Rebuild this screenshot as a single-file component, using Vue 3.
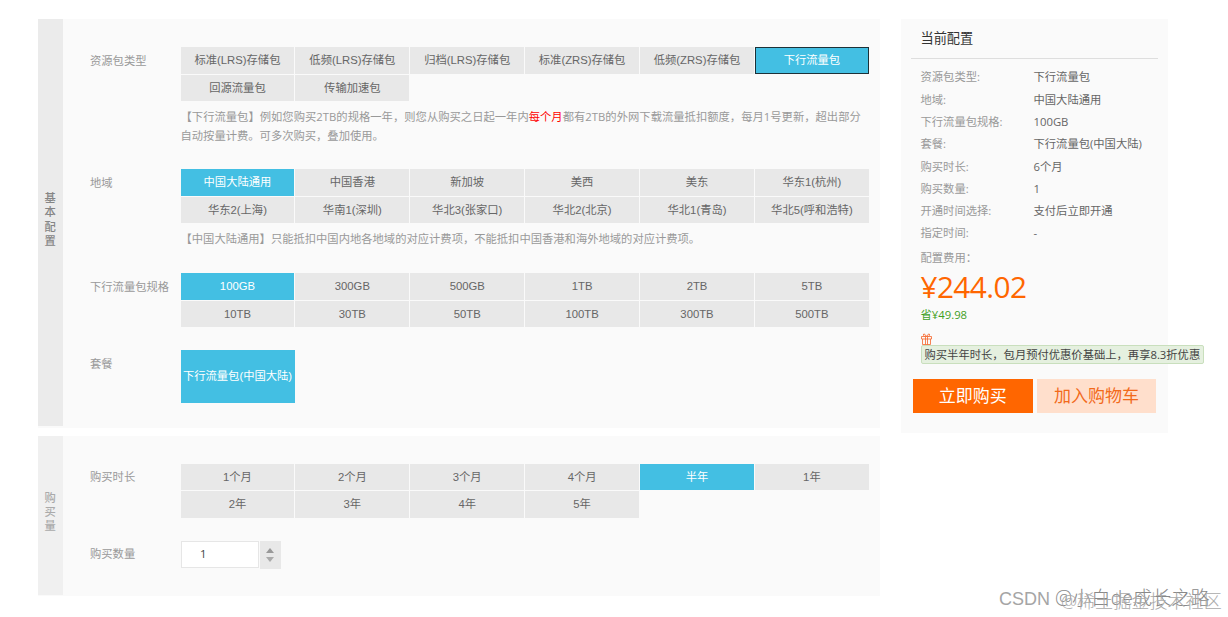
<script setup>
import { ref } from "vue";

const types = ["标准(LRS)存储包", "低频(LRS)存储包", "归档(LRS)存储包", "标准(ZRS)存储包", "低频(ZRS)存储包", "下行流量包", "回源流量包", "传输加速包"];
const regions = ["中国大陆通用", "中国香港", "新加坡", "美西", "美东", "华东1(杭州)", "华东2(上海)", "华南1(深圳)", "华北3(张家口)", "华北2(北京)", "华北1(青岛)", "华北5(呼和浩特)"];
const specs = ["100GB", "300GB", "500GB", "1TB", "2TB", "5TB", "10TB", "30TB", "50TB", "100TB", "300TB", "500TB"];
const durations = ["1个月", "2个月", "3个月", "4个月", "半年", "1年", "2年", "3年", "4年", "5年"];

const type = ref("下行流量包");
const region = ref("中国大陆通用");
const spec = ref("100GB");
const duration = ref("半年");
const count = ref(1);

const summary = [
    { label: "资源包类型:", value: "下行流量包" },
    { label: "地域:", value: "中国大陆通用" },
    { label: "下行流量包规格:", value: "100GB" },
    { label: "套餐:", value: "下行流量包(中国大陆)" },
    { label: "购买时长:", value: "6个月" },
    { label: "购买数量:", value: "1" },
    { label: "开通时间选择:", value: "支付后立即开通" },
    { label: "指定时间:", value: "-" },
];
</script>

<template>
    <div class="page">
        <main class="main">
            <section class="panel basic">
                <div class="side"><span>基</span><span>本</span><span>配</span><span>置</span></div>
                <div class="rows">
                    <div class="row row-type">
                        <div class="label">资源包类型</div>
                        <div class="field">
                            <div class="options">
                                <div v-for="item in types" :key="item" class="option" :class="{ active: item === type, focused: item === type }" @click="type = item">{{ item }}</div>
                            </div>
                            <div class="desc">
                                <p class="wide">【下行流量包】例如您购买2TB的规格一年，则您从购买之日起一年内<em>每个月</em>都有2TB的外网下载流量抵扣额度，每月1号更新，超出部分</p>
                                <p>自动按量计费。可多次购买，叠加使用。</p>
                            </div>
                        </div>
                    </div>
                    <div class="row row-region">
                        <div class="label">地域</div>
                        <div class="field">
                            <div class="options">
                                <div v-for="item in regions" :key="item" class="option" :class="{ active: item === region }" @click="region = item">{{ item }}</div>
                            </div>
                            <div class="desc">
                                <p>【中国大陆通用】只能抵扣中国内地各地域的对应计费项，不能抵扣中国香港和海外地域的对应计费项。</p>
                            </div>
                        </div>
                    </div>
                    <div class="row row-spec">
                        <div class="label">下行流量包规格</div>
                        <div class="options">
                            <div v-for="item in specs" :key="item" class="option" :class="{ active: item === spec }" @click="spec = item">{{ item }}</div>
                        </div>
                    </div>
                    <div class="row">
                        <div class="label">套餐</div>
                        <div class="package">下行流量包(中国大陆)</div>
                    </div>
                </div>
            </section>

            <section class="panel amount">
                <div class="side light"><span>购</span><span>买</span><span>量</span></div>
                <div class="rows">
                    <div class="row row-duration">
                        <div class="label">购买时长</div>
                        <div class="options">
                            <div v-for="item in durations" :key="item" class="option" :class="{ active: item === duration }" @click="duration = item">{{ item }}</div>
                        </div>
                    </div>
                    <div class="row">
                        <div class="label">购买数量</div>
                        <div class="stepper">
                            <div class="number">{{ count }}</div>
                            <div class="arrows">
                                <i class="up" @click="count++"></i>
                                <i class="down" @click="count > 1 && count--"></i>
                            </div>
                        </div>
                    </div>
                </div>
            </section>
        </main>

        <aside class="summary">
            <h2 class="title">当前配置</h2>
            <dl class="list">
                <div v-for="item in summary" :key="item.label" class="item">
                    <dt>{{ item.label }}</dt>
                    <dd>{{ item.value }}</dd>
                </div>
            </dl>
            <div class="cost-label">配置费用：</div>
            <div class="price">¥244.02</div>
            <div class="save">省¥49.98</div>
            <svg class="gift" viewBox="0 0 11 12" fill="none" stroke="#f5652a">
                <path d="M0.5 3.5h10v2.5h-10zM1.5 6v5.5h8V6M4.5 3.5v8M6.5 3.5v8" stroke-width="0.8" />
                <path d="M5.5 3.4L3.2 0.8L2.2 2L3.6 3.4M5.5 3.4L7.8 0.8L8.8 2L7.4 3.4" stroke-width="0.9" />
            </svg>
            <div class="tip">购买半年时长，包月预付优惠价基础上，再享8.3折优惠</div>
            <div class="buttons">
                <button class="buy">立即购买</button>
                <button class="cart">加入购物车</button>
            </div>
        </aside>

        <div class="mark mark-author"><span class="latin">CSDN </span>@小白de成长之路</div>
        <div class="mark mark-site">@稀土掘金技术社区</div>
    </div>
</template>

<style>
body {
    background: #fff;
    overflow: hidden;
}
</style>

<style scoped>
.page {
    position: relative;
    box-sizing: border-box;
    width: 1228px;
    height: 617px;
    padding: 19px 0 0 38px;
    display: flex;
    align-items: flex-start;
    gap: 21px;
    overflow: hidden;
    font-family: "Open Sans", "Noto Sans CJK SC", sans-serif;
    font-size: 11.3px;
    color: #999;
    white-space: nowrap;
}

.main {
    width: 842px;
    display: flex;
    flex-direction: column;
    gap: 8px;
}

.panel {
    display: flex;
    background: #fafafa;
}

.basic {
    height: 409px;
}

.amount {
    height: 159.6px;
}

.side {
    width: 24.5px;
    display: flex;
    flex-direction: column;
    align-items: center;
    justify-content: center;
    background: #ebebeb;
    color: #858585;
    font-weight: 500;
    line-height: 14.3px;
    padding-bottom: 6px;
    margin-bottom: 2px;
    box-sizing: border-box;
}

.side.light {
    background: #f0f0f0;
    color: #aaa;
    margin-bottom: 1px;
}

.rows {
    padding: 28px 0 0 27.5px;
}

.amount .rows {
    padding-top: 27.6px;
}

.row {
    display: flex;
}

.row-type {
    height: 122px;
}

.row-region {
    height: 104px;
}

.row-spec {
    height: 76.5px;
}

.row-duration {
    height: 77.6px;
}

.label {
    width: 90.5px;
    line-height: 27px;
}

.amount .label {
    line-height: 26px;
}

.options {
    display: grid;
    grid-template-columns: repeat(6, 113.9px);
    grid-auto-rows: 26.5px;
    gap: 1px;
    align-content: start;
    font-family: "Liberation Sans", "Noto Sans CJK SC", sans-serif;
    color: #666;
}

.option {
    background: #e8e8e8;
    text-align: center;
    line-height: 27.4px;
    height: 26.5px;
    cursor: pointer;
}

.option.active {
    background: #43bfe3;
    color: #fff;
}

.option.focused {
    outline: 1px solid #1c3138;
    outline-offset: -1px;
}

.desc {
    margin-top: 6px;
    line-height: 19px;
}

.desc p {
    margin: 0;
}

.desc .wide {
    letter-spacing: 0.02px;
}

.desc em {
    color: #f00;
    font-style: normal;
}

.package {
    width: 114px;
    height: 53px;
    line-height: 53px;
    background: #43bfe3;
    color: #fff;
    text-align: center;
    font-family: "Liberation Sans", "Noto Sans CJK SC", sans-serif;
}

.stepper {
    display: flex;
    gap: 1px;
}

.number {
    width: 78px;
    height: 27px;
    box-sizing: border-box;
    border: 1px solid #e6e6e6;
    background: #fff;
    color: #444;
    line-height: 24px;
    padding-left: 18.5px;
}

.arrows {
    width: 21px;
    height: 28px;
    display: flex;
    flex-direction: column;
    align-items: center;
    justify-content: center;
    gap: 4px;
    background: #e8e8e8;
}

.up,
.down {
    border: 4.5px solid transparent;
}

.up {
    border-top: 0;
    border-bottom: 5px solid #999;
}

.down {
    border-bottom: 0;
    border-top: 5px solid #aaa;
}

.summary {
    box-sizing: border-box;
    width: 267px;
    height: 414px;
    padding: 0 10px;
    background: #fafafa;
}

.title {
    margin: 0;
    height: 39px;
    padding: 0 0 0 9.5px;
    border-bottom: 1px solid #dedede;
    font-size: 13.2px;
    font-weight: 400;
    line-height: 39px;
    color: #333;
}

.list {
    margin: 7.4px 0 0 9.5px;
}

.item {
    display: flex;
    line-height: 22.3px;
}

.item dt {
    width: 113px;
}

.item dd {
    margin: 0;
    color: #666;
}

.cost-label {
    margin-left: 9.5px;
    line-height: 25px;
}

.price {
    margin-left: 9.5px;
    line-height: 33px;
    font-size: 29.8px;
    letter-spacing: -0.6px;
    color: #f60;
}

.save {
    margin-left: 9.5px;
    line-height: 23px;
    color: #3f9f1f;
}

.gift {
    display: block;
    width: 11px;
    height: 12px;
    margin: 7.6px 0 0 10px;
}

.tip {
    box-sizing: border-box;
    width: 283.5px;
    height: 18.5px;
    margin-left: 9.5px;
    padding-left: 3px;
    border: 1px solid #c9dfbd;
    border-radius: 2px;
    background: #e5f0df;
    line-height: 17px;
    color: #444;
}

.buttons {
    display: flex;
    gap: 4px;
    margin: 15px 0 0 2px;
}

.buttons button {
    width: 119.7px;
    height: 34px;
    flex: none;
    padding: 0;
    border: 0;
    font-family: inherit;
    font-size: 17px;
    line-height: 34px;
    cursor: pointer;
}

.buy {
    background: #f60;
    color: #fff;
}

.cart {
    background: #ffdfcc;
    color: #f26a1b;
}

/* watermarks lie over the page */
.mark {
    position: absolute;
    line-height: 24px;
    font-weight: 300;
}

.mark-author {
    left: 999px;
    top: 586px;
    font-size: 19.3px;
    color: #888;
}

.mark-author .latin {
    font-family: "Liberation Sans", sans-serif;
    font-size: 18px;
    color: #a5a5a5;
}

.mark-site {
    left: 1061px;
    top: 589px;
    font-size: 18.1px;
    color: #aaa;
}
</style>
